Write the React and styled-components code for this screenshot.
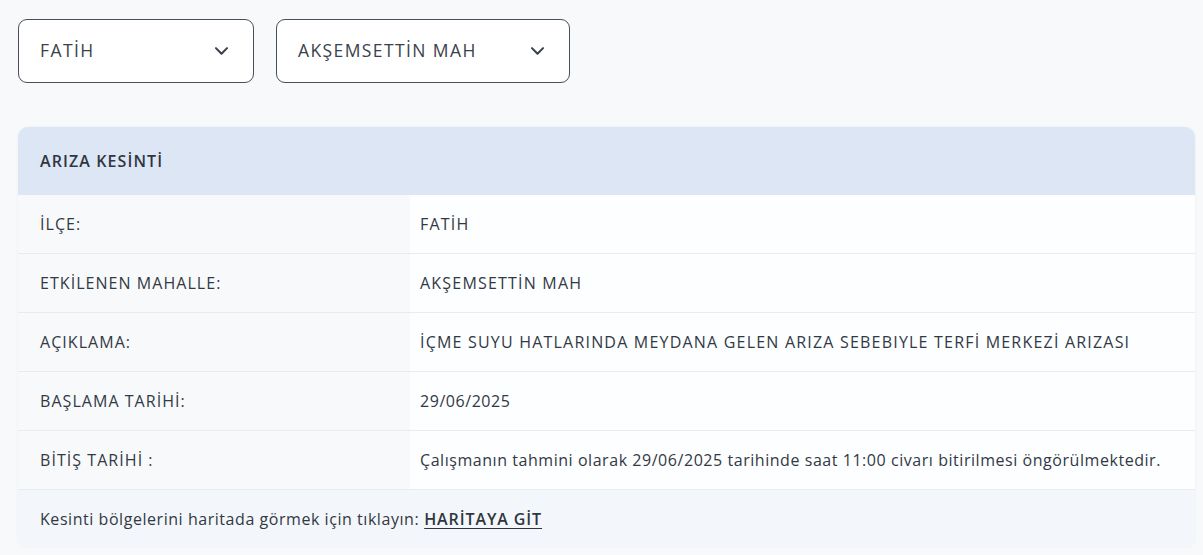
import React from "react";
import styled, { createGlobalStyle } from "styled-components";

const Global = createGlobalStyle`
  html, body { margin: 0; padding: 0; background: #f8f9fb; }
  body { font-family: "Open Sans", "Noto Sans", sans-serif; color: #323944; }
`;

const Page = styled.div`
  padding: 19px 8px 0 18px;
  display: flex;
  flex-direction: column;
  gap: 44px;
`;

const Filters = styled.div`
  display: flex;
  gap: 22px;
`;

const Select = styled.div`
  box-sizing: border-box;
  width: ${(p) => p.$w}px;
  height: 64px;
  border: 1px solid #4a4f57;
  border-radius: 9px;
  background: #fff;
  display: flex;
  align-items: center;
  justify-content: space-between;
  padding: 0 22px 2px 21px;
  font-size: 17.5px;
  letter-spacing: 1.4px;
  color: #3a414c;
`;

const Card = styled.div`
  width: 1177px;
  border-radius: 10px;
  overflow: hidden;
  background: #f8f9fb;
  box-shadow: 0 0 3px rgba(40, 60, 90, 0.06);
`;

const Header = styled.div`
  height: 68px;
  background: #dde6f5;
  display: flex;
  align-items: center;
  padding-left: 22px;
  font-size: 16px;
  font-weight: 600;
  letter-spacing: 1.1px;
  color: #2f3641;
`;

const Row = styled.div`
  display: grid;
  grid-template-columns: 392px 1fr;
  height: 59px;
  border-bottom: 1px solid #e8ebf0;
  box-sizing: border-box;
`;

const Label = styled.div`
  display: flex;
  align-items: center;
  padding-left: 22px;
  font-size: 16px;
  letter-spacing: 1.05px;
  color: #323944;
  background: #f8f9fb;
`;

const Value = styled.div`
  display: flex;
  align-items: center;
  padding-left: 10px;
  font-size: 16px;
  letter-spacing: ${(p) => (p.$caps ? "1.2px" : "0.55px")};
  color: #323944;
  background: #fdfeff;
`;

const Footer = styled.div`
  height: 58px;
  background: #f3f6fa;
  display: flex;
  align-items: center;
  padding-left: 22px;
  font-size: 16px;
  letter-spacing: 0.55px;
  color: #323944;
`;

const Link = styled.a`
  margin-left: 5px;
  font-weight: 600;
  letter-spacing: 0.9px;
  color: #2f3641;
  text-decoration: underline;
  text-underline-offset: 3px;
`;

const Chevron = () => (
  <svg width="19" height="19" viewBox="0 0 24 24" fill="none" stroke="#3a414c" strokeWidth="2.6" strokeLinecap="round" strokeLinejoin="round">
    <path d="M5 9l7 7 7-7" />
  </svg>
);

const rows = [
  ["İLÇE:", "FATİH", true],
  ["ETKİLENEN MAHALLE:", "AKŞEMSETTİN MAH", true],
  ["AÇIKLAMA:", "İÇME SUYU HATLARINDA MEYDANA GELEN ARIZA SEBEBIYLE TERFİ MERKEZİ ARIZASI", true],
  ["BAŞLAMA TARİHİ:", "29/06/2025", false],
  ["BİTİŞ TARİHİ :", "Çalışmanın tahmini olarak 29/06/2025 tarihinde saat 11:00 civarı bitirilmesi öngörülmektedir.", false],
];

export default function App() {
  return (
    <>
      <Global />
      <Page>
        <Filters>
          <Select $w={236}>
            <span>FATİH</span>
            <Chevron />
          </Select>
          <Select $w={294}>
            <span>AKŞEMSETTİN MAH</span>
            <Chevron />
          </Select>
        </Filters>
        <Card>
          <Header>ARIZA KESİNTİ</Header>
          {rows.map(([l, v, caps]) => (
            <Row key={l}>
              <Label>{l}</Label>
              <Value $caps={caps}>{v}</Value>
            </Row>
          ))}
          <Footer>
            Kesinti bölgelerini haritada görmek için tıklayın:
            <Link href="#">HARİTAYA GİT</Link>
          </Footer>
        </Card>
      </Page>
    </>
  );
}
